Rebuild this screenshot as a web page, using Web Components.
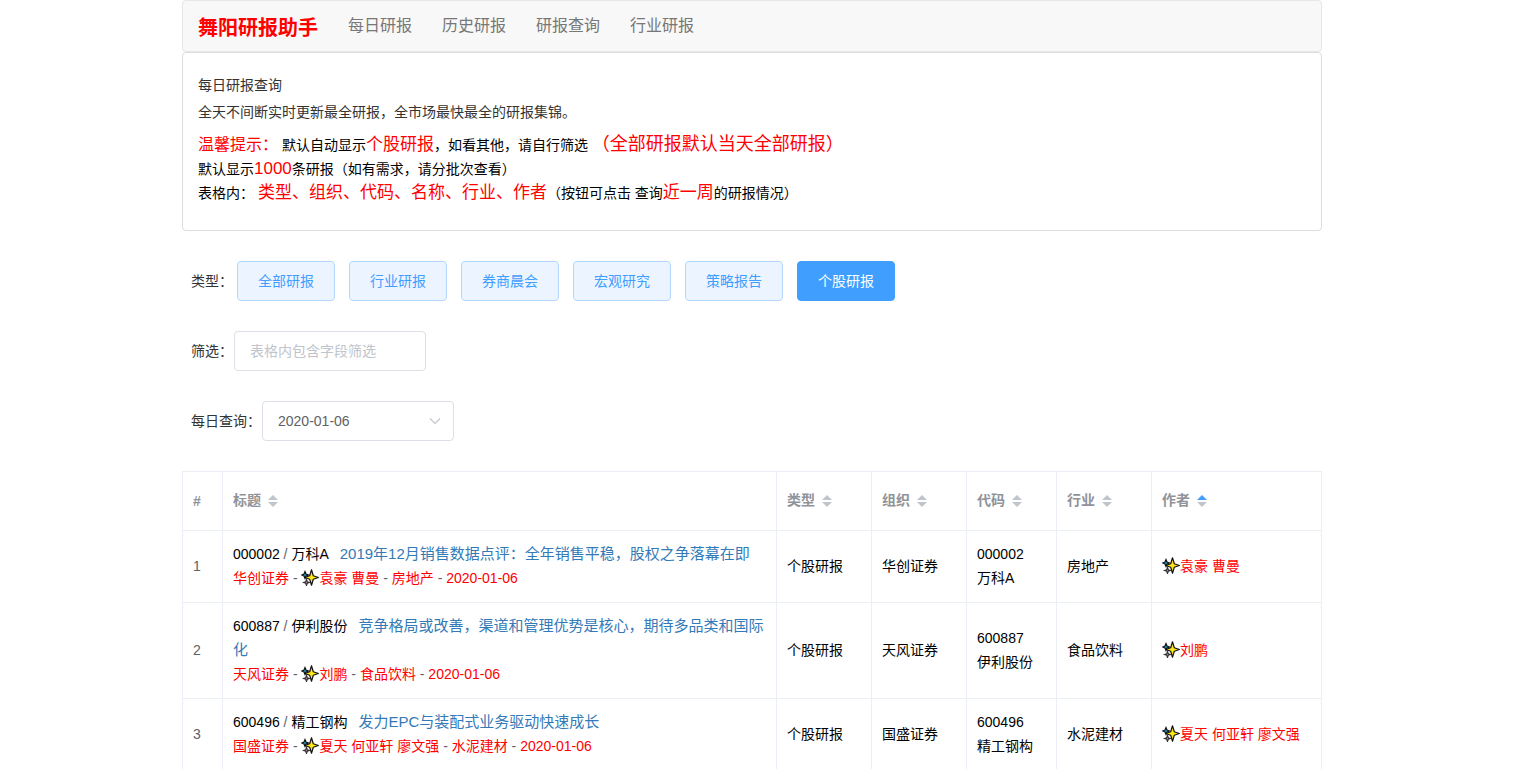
<!DOCTYPE html>
<html lang="zh-CN">
<head>
<meta charset="utf-8">
<title>舞阳研报助手</title>
<style>
    html, body {
        margin: 0;
        height: 100%;
        overflow: hidden;
        background: #fff;
    }

    body {
        font-family: "Liberation Sans", "Noto Sans CJK SC", sans-serif;
        font-size: 14px;
        color: #333;
    }

    .page {
        width: 1140px;
        margin-left: 182px;
    }
</style>
</head>
<body>
<div class="page">
    <report-navbar brand="舞阳研报助手">
        <nav-link>每日研报</nav-link>
        <nav-link>历史研报</nav-link>
        <nav-link>研报查询</nav-link>
        <nav-link>行业研报</nav-link>
    </report-navbar>

    <notice-panel></notice-panel>

    <filter-row label="类型：" gap="4">
        <type-button>全部研报</type-button>
        <type-button>行业研报</type-button>
        <type-button>券商晨会</type-button>
        <type-button>宏观研究</type-button>
        <type-button>策略报告</type-button>
        <type-button active>个股研报</type-button>
    </filter-row>

    <filter-row label="筛选：" gap="1">
        <text-field placeholder="表格内包含字段筛选"></text-field>
    </filter-row>

    <filter-row label="每日查询：" gap="1">
        <date-select value="2020-01-06"></date-select>
    </filter-row>

    <report-table></report-table>
</div>

<script>
    // Navbar
    class ReportNavbar extends HTMLElement {
        constructor() {
            super();
            this.attachShadow({ mode: 'open' });
        }

        connectedCallback() {
            const brand = this.getAttribute('brand') || '';
            this.shadowRoot.innerHTML = `
                <style>
                    :host {
                        display: flex;
                        align-items: center;
                        height: 50px;
                        background: #f8f8f8;
                        border: 1px solid #e7e7e7;
                        border-radius: 4px;
                    }

                    .brand {
                        padding: 0 15px;
                        font-size: 20px;
                        font-weight: 700;
                        color: #f00;
                    }

                    .links {
                        display: flex;
                    }
                </style>
                <span class="brand">${brand}</span>
                <div class="links"><slot></slot></div>
            `;
        }
    }

    class NavLink extends HTMLElement {
        constructor() {
            super();
            this.attachShadow({ mode: 'open' });
            this.shadowRoot.innerHTML = `
                <style>
                    :host {
                        display: block;
                        padding: 0 15px;
                        font-size: 16px;
                        line-height: 50px;
                        color: #777;
                        cursor: pointer;
                    }
                </style>
                <slot></slot>
            `;
        }
    }

    // Tips panel under the navbar
    class NoticePanel extends HTMLElement {
        constructor() {
            super();
            this.attachShadow({ mode: 'open' });
            this.shadowRoot.innerHTML = `
                <style>
                    :host {
                        display: block;
                        box-sizing: border-box;
                        height: 179px;
                        padding: 22px 15px 0;
                        background: #fff;
                        border: 1px solid #ddd;
                        border-radius: 4px;
                    }

                    p {
                        margin: 0;
                        line-height: 20px;
                    }

                    .intro {
                        margin-bottom: 7px;
                    }

                    .tip {
                        line-height: 24px;
                        color: #000;
                    }

                    .first {
                        margin-top: 10px;
                    }

                    em {
                        font-style: normal;
                        color: #f00;
                        font-size: 17px;
                    }

                    .s16 { font-size: 16px; }
                    .s18 { font-size: 18px; }
                </style>
                <p class="intro">每日研报查询</p>
                <p class="intro">全天不间断实时更新最全研报，全市场最快最全的研报集锦。</p>
                <p class="tip first"><em class="s16">温馨提示：</em> 默认自动显示<em>个股研报</em>，如看其他，请自行筛选 <em class="s18">（全部研报默认当天全部研报）</em></p>
                <p class="tip">默认显示<em>1000</em>条研报（如有需求，请分批次查看）</p>
                <p class="tip">表格内： <em>类型、组织、代码、名称、行业、作者</em>（按钮可点击 查询<em>近一周</em>的研报情况）</p>
            `;
        }
    }

    // Label on the left, controls in the slot
    class FilterRow extends HTMLElement {
        constructor() {
            super();
            this.attachShadow({ mode: 'open' });
        }

        connectedCallback() {
            const label = this.getAttribute('label') || '';
            const gap = this.getAttribute('gap') || '4';
            this.shadowRoot.innerHTML = `
                <style>
                    :host {
                        display: flex;
                        align-items: center;
                        height: 40px;
                        margin-top: 30px;
                        padding-left: 9px;
                    }

                    .label {
                        margin-right: ${gap}px;
                        padding-bottom: 2px;
                        color: #333;
                    }

                    .controls {
                        display: flex;
                        gap: 14px;
                    }
                </style>
                <span class="label">${label}</span>
                <div class="controls"><slot></slot></div>
            `;
        }
    }

    class TypeButton extends HTMLElement {
        constructor() {
            super();
            this.attachShadow({ mode: 'open' });
            this.shadowRoot.innerHTML = `
                <style>
                    :host {
                        display: flex;
                        align-items: center;
                        justify-content: center;
                        box-sizing: border-box;
                        width: 98px;
                        height: 40px;
                        padding-bottom: 2px;
                        color: #409eff;
                        background: #ecf5ff;
                        border: 1px solid #b3d8ff;
                        border-radius: 4px;
                        cursor: pointer;
                    }

                    :host([active]) {
                        color: #fff;
                        background: #409eff;
                        border-color: #409eff;
                    }
                </style>
                <slot></slot>
            `;
        }
    }

    class TextField extends HTMLElement {
        constructor() {
            super();
            this.attachShadow({ mode: 'open' });
        }

        connectedCallback() {
            const placeholder = this.getAttribute('placeholder') || '';
            this.shadowRoot.innerHTML = `
                <style>
                    :host {
                        display: block;
                    }

                    input {
                        display: block;
                        box-sizing: border-box;
                        width: 192px;
                        height: 40px;
                        padding: 0 15px;
                        font: inherit;
                        color: #606266;
                        border: 1px solid #dcdfe6;
                        border-radius: 4px;
                        outline: none;
                    }

                    input::placeholder {
                        color: #c0c4cc;
                        opacity: 1;
                    }
                </style>
                <input type="text" placeholder="${placeholder}">
            `;
        }
    }

    class DateSelect extends HTMLElement {
        constructor() {
            super();
            this.attachShadow({ mode: 'open' });
        }

        connectedCallback() {
            const value = this.getAttribute('value') || '';
            this.shadowRoot.innerHTML = `
                <style>
                    :host {
                        display: flex;
                        align-items: center;
                        justify-content: space-between;
                        box-sizing: border-box;
                        width: 192px;
                        height: 40px;
                        padding: 0 11px 0 15px;
                        color: #606266;
                        border: 1px solid #dcdfe6;
                        border-radius: 4px;
                    }

                    svg {
                        display: block;
                    }
                </style>
                <span>${value}</span>
                <svg width="14" height="14" viewBox="0 0 14 14" fill="none" stroke="#c0c4cc" stroke-width="1.1">
                    <path d="M2 4.5 L7 9.5 L12 4.5"/>
                </svg>
            `;
        }
    }

    // Small sparkle in front of the authors
    class AuthorStar extends HTMLElement {
        constructor() {
            super();
            this.attachShadow({ mode: 'open' });
            this.shadowRoot.innerHTML = `
                <style>
                    :host {
                        display: inline-block;
                        width: 18px;
                        height: 17px;
                        vertical-align: -3px;
                    }

                    svg {
                        display: block;
                    }
                </style>
                <svg width="18" height="17" viewBox="0 0 18 17">
                    <path d="M4 2.5 L5 5 L7.5 6 L5 7 L4 9.5 L3 7 L.7 6 L3 5Z" fill="#29a8d8" stroke="#111" stroke-width="1.2"/>
                    <path d="M5.5 10.5 L6.3 12.7 L8.5 13.5 L6.3 14.3 L5.5 16.5 L4.7 14.3 L2.5 13.5 L4.7 12.7Z" fill="#e080b8" stroke="#333" stroke-width="1.1"/>
                    <path d="M10.5 .8 L12.3 6.7 L17.4 8.5 L12.3 10.3 L10.5 16.2 L8.7 10.3 L3.8 8.5 L8.7 6.7Z" fill="#ffe81a" stroke="#111" stroke-width="1.2" stroke-linejoin="round"/>
                </svg>
            `;
        }
    }

    const REPORTS = [
        {
            code: '000002', name: '万科A',
            title: '2019年12月销售数据点评：全年销售平稳，股权之争落幕在即',
            type: '个股研报', org: '华创证券', industry: '房地产',
            authors: '袁豪 曹曼', date: '2020-01-06'
        },
        {
            code: '600887', name: '伊利股份',
            title: '竞争格局或改善，渠道和管理优势是核心，期待多品类和国际化',
            type: '个股研报', org: '天风证券', industry: '食品饮料',
            authors: '刘鹏', date: '2020-01-06'
        },
        {
            code: '600496', name: '精工钢构',
            title: '发力EPC与装配式业务驱动快速成长',
            type: '个股研报', org: '国盛证券', industry: '水泥建材',
            authors: '夏天 何亚轩 廖文强', date: '2020-01-06'
        }
    ];

    class ReportTable extends HTMLElement {
        constructor() {
            super();
            this.attachShadow({ mode: 'open' });
        }

        connectedCallback() {
            const columns = [
                { text: '标题' },
                { text: '类型' },
                { text: '组织' },
                { text: '代码' },
                { text: '行业' },
                { text: '作者', sort: 'asc' }
            ];

            const head = columns.map(col => `
                <th>${col.text}<span class="caret ${col.sort || ''}"><i class="up"></i><i class="down"></i></span></th>
            `).join('');

            const rows = REPORTS.map((r, i) => `
                <tr>
                    <td class="num">${i + 1}</td>
                    <td>
                        <div>${r.code} <span class="sep">/</span> ${r.name}<a class="title">${r.title}</a></div>
                        <div class="meta">${r.org} <span class="sep">-</span> <author-star></author-star>${r.authors} <span class="sep">-</span> ${r.industry} <span class="sep">-</span> ${r.date}</div>
                    </td>
                    <td>${r.type}</td>
                    <td>${r.org}</td>
                    <td>${r.code}<br>${r.name}</td>
                    <td>${r.industry}</td>
                    <td class="meta"><author-star></author-star>${r.authors}</td>
                </tr>
            `).join('');

            this.shadowRoot.innerHTML = `
                <style>
                    :host {
                        display: block;
                        margin-top: 30px;
                    }

                    table {
                        width: 1140px;
                        table-layout: fixed;
                        border-collapse: separate;
                        border-spacing: 0;
                        border-top: 1px solid #ebeef5;
                        border-left: 1px solid #ebeef5;
                        color: #000;
                        line-height: 24px;
                    }

                    th, td {
                        padding: 11px 10px 12px;
                        text-align: left;
                        vertical-align: middle;
                        border-right: 1px solid #ebeef5;
                        border-bottom: 1px solid #ebeef5;
                    }

                    th {
                        padding: 12px 10px;
                        font-weight: 700;
                        font-size: 14px;
                        color: #909399;
                        height: 34px;
                    }

                    .num {
                        color: #606266;
                    }

                    .sep {
                        color: #606266;
                    }

                    .title {
                        margin-left: 11px;
                        font-size: 15px;
                        color: #337ab7;
                        cursor: pointer;
                    }

                    .meta {
                        color: #f00;
                    }

                    .caret {
                        display: inline-block;
                        position: relative;
                        width: 24px;
                        height: 34px;
                        vertical-align: middle;
                    }

                    .caret i {
                        position: absolute;
                        left: 7px;
                        width: 0;
                        height: 0;
                        border: 5px solid transparent;
                    }

                    .caret .up {
                        top: 6px;
                        border-bottom-color: #c0c4cc;
                    }

                    .caret .down {
                        top: 18px;
                        border-top-color: #c0c4cc;
                    }

                    .caret.asc .up {
                        border-bottom-color: #409eff;
                    }
                </style>
                <table>
                    <colgroup>
                        <col style="width:40px"><col style="width:554px"><col style="width:95px">
                        <col style="width:95px"><col style="width:90px"><col style="width:95px"><col style="width:170px">
                    </colgroup>
                    <thead><tr><th>#</th>${head}</tr></thead>
                    <tbody>${rows}</tbody>
                </table>
            `;
        }
    }

    customElements.define('author-star', AuthorStar);
    customElements.define('report-navbar', ReportNavbar);
    customElements.define('nav-link', NavLink);
    customElements.define('notice-panel', NoticePanel);
    customElements.define('filter-row', FilterRow);
    customElements.define('type-button', TypeButton);
    customElements.define('text-field', TextField);
    customElements.define('date-select', DateSelect);
    customElements.define('report-table', ReportTable);
</script>
</body>
</html>
